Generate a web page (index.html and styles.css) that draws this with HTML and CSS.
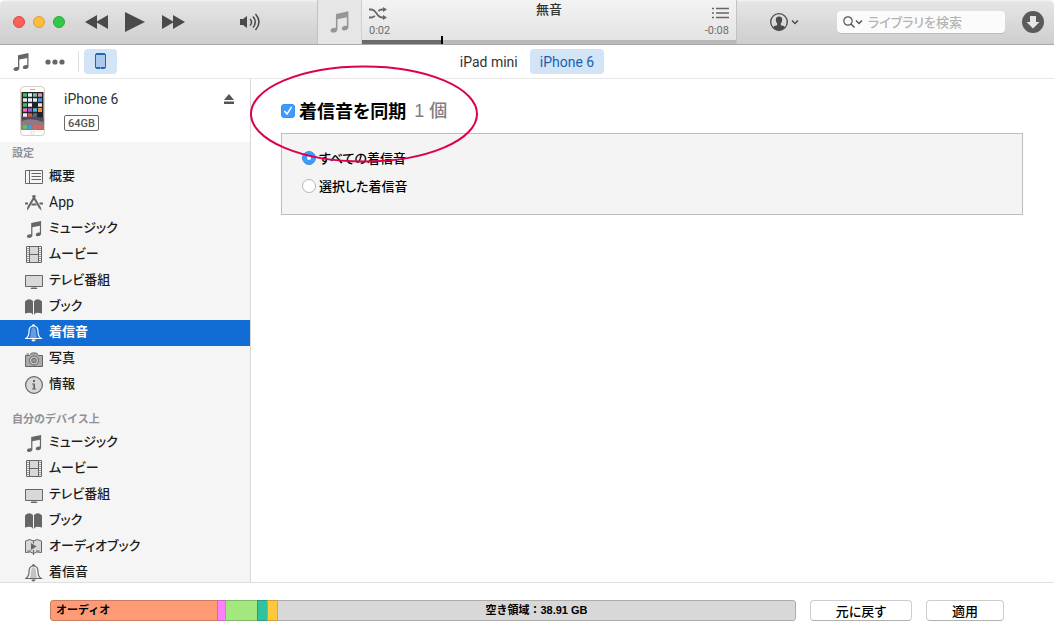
FILE: index.html
```html
<!DOCTYPE html>
<html lang="ja">
<head>
<meta charset="utf-8">
<title>iTunes</title>
<link rel="stylesheet" href="styles.css">
</head>
<body>
<svg class="defs" aria-hidden="true">
  <symbol id="i-note" viewBox="0 0 16 18"><path d="M5 2.200 15.500 0v13.400c0 1.300-1.100 2.300-2.600 2.600-1.900.4-3.200-.5-3-1.800.2-1.400 2-2.400 4.300-2V5L6.300 6.600v8.700c0 1.300-1.200 2.300-2.800 2.600-1.900.3-3.200-.6-3-1.900.2-1.400 2-2.400 4.500-2z" fill="currentColor"/></symbol>
  <symbol id="i-list" viewBox="0 0 18 18"><path d="M.5 2.500h17v13H.5zM4.500 2.500v13M6.500 5.500H16M6.500 8.500H16M6.500 11.500H16" fill="none" stroke="currentColor"/></symbol>
  <symbol id="i-app" viewBox="0 0 18 18"><path d="m10.200 1.500-7 12M7.700 1.500l7 12" fill="none" stroke="currentColor" stroke-width="2"/><path d="M0 9.500h3M6.500 10.500h5M14.500 9.500H18" stroke="currentColor" stroke-width="2" fill="none"/><path d="m2.400 12.500 2 1.200-2.400 3zM13.600 13.700l2-1.200 1 4.200z" fill="currentColor"/></symbol>
  <symbol id="i-film" viewBox="0 0 18 18"><path d="M4.500.5h9v16h-9z" fill="#d8d8d8"/><path d="M3 2v14M15 2v14" stroke="currentColor" stroke-dasharray="1 1" stroke-width="2" opacity=".6"/><path d="M1.500.5h15v16h-15zM4.500.5v16M13.500.5v16M4.500 8.500h9" fill="none" stroke="currentColor"/></symbol>
  <symbol id="i-tv" viewBox="0 0 18 18"><path d="M.5 3.500h17v11H.5z" fill="#d8d8d8" stroke="currentColor"/><path d="M6.500 15.500h5l1 1.500h-7z" fill="currentColor"/></symbol>
  <symbol id="i-book" viewBox="0 0 18 18"><path d="M0 3.500Q4-.5 8 3v14Q7 13.500 0 15.500zM9 3q4-3.500 8 .5v12Q10 13.500 9 17z" fill="currentColor"/></symbol>
  <symbol id="i-abook" viewBox="0 0 18 18"><path d="M.5 3Q5 0 8.500 3 12 0 16.500 3v11.500Q11 13 8.500 15.500 6 13 .5 14.500z" fill="#d8d8d8" stroke="currentColor"/><path d="M8.500 2.500v3M8.500 12v5M2.500 13H6m5 0h3.500" stroke="currentColor" fill="none"/><path d="m6 5 5.500 3.500L6 12z" fill="currentColor"/></symbol>
  <symbol id="i-bell" viewBox="0 0 18 18"><path d="M4.800 14q1.200-2 1.200-6.500 0-3.500 2.500-4.500Q11 4 11 7.500q0 4.500 1.200 6.500z" fill="currentColor" opacity=".35"/><path d="M.8 14.500Q4 12.500 4 7.500q0-5.500 4.500-5.500T13 7.500q0 5 3.200 7zM7.200 2Q7.200.8 8.500.8T9.800 2" fill="none" stroke="currentColor" stroke-width="1.200"/><path d="M6.300 15.500h4.400q-.3 2-2.200 2t-2.200-2z" fill="currentColor"/></symbol>
  <symbol id="i-camera" viewBox="0 0 18 18"><path d="M.5 5.500h4l2-2.500h5l2 2.500h4v11H.5z" fill="#aaa" stroke="currentColor"/><path d="M1.500 4h2.500" stroke="currentColor"/><circle cx="9" cy="10.500" r="4.500" fill="#ccc" stroke="currentColor"/><circle cx="9" cy="10.500" r="2.300" fill="#999" stroke="currentColor"/></symbol>
  <symbol id="i-info" viewBox="0 0 18 18"><circle cx="9" cy="9" r="8.400" fill="#d8d8d8" stroke="currentColor" stroke-width="1.200"/><path d="M8 4h2v2H8zM7 7.500h3V12.500h1.200v1H7v-1h1.300v-4H7z" fill="currentColor"/></symbol>
  <symbol id="i-chev" viewBox="0 0 8 6"><path d="m1 1.500 3 3 3-3" fill="none" stroke="currentColor" stroke-width="1.500"/></symbol>
</svg>

<header class="toolbar">
  <div class="toolbar-left">
    <div class="lights">
      <button class="light red" aria-label="閉じる"></button>
      <button class="light amber" aria-label="しまう"></button>
      <button class="light green" aria-label="拡大"></button>
    </div>
    <div class="transport">
      <button class="plain" aria-label="前へ"><svg width="23" height="14"><path d="M12 0v14L0 7zM23 0v14L11 7z" fill="currentColor"/></svg></button>
      <button class="plain" aria-label="再生"><svg width="20" height="20"><path d="M0 0v20l20-10z" fill="currentColor"/></svg></button>
      <button class="plain" aria-label="次へ"><svg width="23" height="14"><path d="M0 0v14l12-7zM11 0v14l12-7z" fill="currentColor"/></svg></button>
    </div>
    <button class="plain volume" aria-label="音量"><svg width="21" height="18"><path d="M0 6h3l4-3v12l-4-3H0z" fill="currentColor"/><path d="M10 6q3 3 0 6.500M13 3.500q4.500 5.500 0 11M15.500 1q7 8 0 16" fill="none" stroke="currentColor" stroke-width="1.500"/></svg></button>
  </div>
  <div class="lcd">
    <div class="art"><svg width="19" height="22"><use href="#i-note"/></svg></div>
    <div class="lcd-main">
      <div class="lcd-side">
        <button class="plain" aria-label="シャッフル"><svg width="18" height="13"><path d="M0 2.500h2.500q2 0 3.800 2.200l3 4q1.500 1.800 3.500 1.800H15M0 10.500h2.500q2 0 3.300-1.700M9.500 4.200Q11 2.500 13 2.500h2" fill="none" stroke="currentColor" stroke-width="1.800"/><path d="m14 0 4 2.500L14 5zM14 8l4 2.500-4 2.500z" fill="currentColor"/></svg></button>
        <span>0:02</span>
      </div>
      <div class="track">無音</div>
      <div class="lcd-side end">
        <button class="plain" aria-label="リスト"><svg width="17" height="12"><path d="M0 1.500h2M0 6h2M0 10.500h2M4 1.500h13M4 6h13M4 10.500h13" stroke="currentColor" stroke-width="1.500"/></svg></button>
        <span>-0:08</span>
      </div>
      <div class="progress"><div class="played"></div></div>
    </div>
  </div>
  <div class="toolbar-right">
    <button class="plain account" aria-label="アカウント"><svg width="18" height="18"><circle cx="9" cy="9" r="8.300" fill="none" stroke="currentColor" stroke-width="1.300"/><path d="M9 3.500q3.500 0 3.200 3.500-.2 2.500-1.400 3.600v1.600q3.700.6 4.300 2.300Q12.500 17.500 9 17.500T2.900 14.500q.6-1.700 4.300-2.300v-1.600Q6 9.500 5.800 7 5.500 3.500 9 3.500z" fill="currentColor"/></svg><svg width="8" height="6"><use href="#i-chev"/></svg></button>
    <label class="search">
      <svg width="12" height="12"><circle cx="5" cy="5" r="4.200" fill="none" stroke="currentColor" stroke-width="1.200"/><path d="m8 8 3.500 3.500" stroke="currentColor" stroke-width="1.500"/></svg><svg width="8" height="6"><use href="#i-chev"/></svg>
      <input type="text" placeholder="ライブラリを検索" aria-label="ライブラリを検索">
    </label>
    <button class="plain" aria-label="ダウンロード"><svg width="22" height="22"><circle cx="11" cy="11" r="11" fill="#5a5a5a"/><path d="M8 5h6v6h3.500L11 17.500 4.500 11H8z" fill="#e6e6e6"/></svg></button>
  </div>
</header>

<nav class="subbar">
  <div class="kinds">
    <button class="plain" aria-label="ミュージック"><svg width="16" height="18"><use href="#i-note"/></svg></button>
    <button class="plain more" aria-label="その他"><svg width="20" height="6"><circle cx="3" cy="3" r="2.600" fill="currentColor"/><circle cx="10" cy="3" r="2.600" fill="currentColor"/><circle cx="17" cy="3" r="2.600" fill="currentColor"/></svg></button>
    <button class="plain device-btn" aria-label="デバイス"><svg width="11" height="17"><rect x=".5" y=".5" width="10" height="15" rx="1.500" fill="#abc8e8" stroke="#1f66b8"/><path d="M1 1.500h9M1 14.500h9" stroke="#1f66b8"/><path d="M5 15h1" stroke="#d2e3f6"/></svg></button>
  </div>
  <div class="tabs">
    <button class="tab">iPad mini</button>
    <button class="tab current">iPhone 6</button>
  </div>
</nav>

<div class="body">
  <aside class="sidebar">
    <div class="device">
      <svg width="25" height="50" viewBox="0 0 25 50">
        <rect x=".5" y=".5" width="24" height="49" rx="3.500" fill="#fefdfb" stroke="#d9cdbf"/>
        <path d="M10 3.500h5" stroke="#b5aea6"/>
        <rect x="1.500" y="6" width="22" height="38" fill="#20222e"/>
        <path d="M1.500 30q7-4 11-1t11 2v7h-22z" fill="#524a5c"/>
        <path d="M1.500 35q9-4 22 1v8h-22z" fill="#8c7b80"/>
        <g stroke-width="3.500">
          <path d="M3 9h4M3 19h4" stroke="#42bf57"/><path d="M8 9h4M13 14h4M3 14h4" stroke="#e9eef2"/><path d="M13 9h4" stroke="#78bf9a"/><path d="M18 9h4" stroke="#ee8d9e"/>
          <path d="M8 14h4M18 24h4" stroke="#eff3f7"/><path d="M18 14h4" stroke="#3da5e0"/>
          <path d="M8 19h4" stroke="#f5f6ed"/><path d="M18 19h4" stroke="#e8e8de"/>
          <path d="M3 24h4" stroke="#e773b2"/><path d="M8 24h4" stroke="#a35ed2"/><path d="M13 24h4" stroke="#48bde8"/><path d="M18 24h4" stroke="#f08a28"/>
          <path d="M3 29h4" stroke="#ededed"/><path d="M8 29h4" stroke="#dc5145"/><path d="M13 29h4" stroke="#646970"/>
          <path d="M3 41h4" stroke="#49d05b"/><path d="M8 41h4" stroke="#3b9de9"/><path d="M13 41h4" stroke="#ef5b51"/><path d="M18 41h4" stroke="#ef5b51"/>
        </g>
        <circle cx="12.500" cy="46.800" r="1.700" fill="#fff" stroke="#d9cdbf" stroke-width=".7"/>
      </svg>
      <div class="device-text"><span class="device-name">iPhone 6</span><span class="capacity">64GB</span></div>
      <button class="plain eject" aria-label="取り出す"><svg width="10" height="10"><path d="m5 0 5 6H0zM0 7.500h10V10H0z" fill="currentColor"/></svg></button>
    </div>
    <h2>設定</h2>
    <ul>
      <li><a href="#"><svg><use href="#i-list"/></svg><span>概要</span></a></li>
      <li><a href="#"><svg><use href="#i-app"/></svg><span class="latin">App</span></a></li>
      <li><a href="#"><svg class="note"><use href="#i-note"/></svg><span>ミュージック</span></a></li>
      <li><a href="#"><svg><use href="#i-film"/></svg><span>ムービー</span></a></li>
      <li><a href="#"><svg><use href="#i-tv"/></svg><span>テレビ番組</span></a></li>
      <li><a href="#"><svg><use href="#i-book"/></svg><span>ブック</span></a></li>
      <li><a href="#" class="selected"><svg><use href="#i-bell"/></svg><span>着信音</span></a></li>
      <li><a href="#"><svg><use href="#i-camera"/></svg><span>写真</span></a></li>
      <li><a href="#"><svg><use href="#i-info"/></svg><span>情報</span></a></li>
    </ul>
    <h2 class="second">自分のデバイス上</h2>
    <ul>
      <li><a href="#"><svg class="note"><use href="#i-note"/></svg><span>ミュージック</span></a></li>
      <li><a href="#"><svg><use href="#i-film"/></svg><span>ムービー</span></a></li>
      <li><a href="#"><svg><use href="#i-tv"/></svg><span>テレビ番組</span></a></li>
      <li><a href="#"><svg><use href="#i-book"/></svg><span>ブック</span></a></li>
      <li><a href="#"><svg><use href="#i-abook"/></svg><span>オーディオブック</span></a></li>
      <li><a href="#"><svg><use href="#i-bell"/></svg><span>着信音</span></a></li>
    </ul>
  </aside>
  <main>
    <div class="sync">
      <input type="checkbox" id="sync" checked>
      <label for="sync">着信音を同期</label>
      <span class="count">1 個</span>
      <svg class="ring" width="230" height="98"><ellipse cx="115" cy="49" rx="113" ry="47.500" fill="none" stroke="#dc0050" stroke-width="2"/></svg>
    </div>
    <div class="options">
      <label><input type="radio" name="tones" checked>すべての着信音</label>
      <label><input type="radio" name="tones">選択した着信音</label>
    </div>
  </main>
</div>

<footer>
  <div class="usage">
    <div class="seg audio">オーディオ</div>
    <div class="seg photos"></div>
    <div class="seg apps"></div>
    <div class="seg books"></div>
    <div class="seg docs"></div>
    <div class="seg free">空き領域：38.91 GB</div>
  </div>
  <button class="push wide">元に戻す</button>
  <button class="push">適用</button>
</footer>
</body>
</html>
```

FILE: styles.css
```css
* { box-sizing: border-box; }
html, body { height: 100%; }
body {
  margin: 0;
  display: flex;
  flex-direction: column;
  background: #fff;
  color: #1c1c1c;
  font: 13px/20px "Noto Sans CJK JP", sans-serif;
  overflow: hidden;
}
svg { display: block; flex: none; }
.defs { position: absolute; width: 0; height: 0; }
button, input { font: inherit; color: inherit; margin: 0; }
.plain { display: flex; align-items: center; padding: 0; border: 0; background: none; color: #4a4a4a; }

.toolbar {
  flex: none;
  display: grid;
  grid-template-columns: 1fr 420px 1fr;
  height: 45px;
  border-bottom: 1px solid #a9a9a9;
  border-radius: 5px 5px 0 0;
  background: linear-gradient(#f4f4f4 0, #e5e5e5 2px, #cecece);
}
.toolbar-left, .toolbar-right { display: flex; align-items: center; }
.toolbar-left { padding-left: 13px; }
.lights { display: flex; gap: 8px; }
.light { width: 12px; height: 12px; padding: 0; border: 1px solid; border-radius: 50%; }
.red { background: #fc605c; border-color: #df4744; }
.amber { background: #fdbc40; border-color: #de9f34; }
.green { background: #34c84a; border-color: #27aa35; }
.transport { display: flex; align-items: center; gap: 17px; margin-left: 20px; }
.volume { margin-left: 55px; }
.lcd {
  display: flex;
  border: solid #c2c2c2;
  border-width: 0 1px;
  background: linear-gradient(#f3f3f3, #e2e2e2);
}
.art { display: flex; align-items: center; justify-content: center; width: 44px; background: #e6e6e6; border-right: 1px solid #d0d0d0; color: #969696; }
.lcd-main { flex: 1; display: grid; grid-template-columns: 1fr auto 1fr; grid-template-rows: 1fr 4px; }
.lcd-side { display: flex; flex-direction: column; gap: 3px; padding: 7px 7px 0; color: #6c6c6c; font: 11px/18px Roboto, sans-serif; }
.lcd-side .plain { height: 12px; color: #666; }
.end { align-items: flex-end; }
.track { margin-top: -1px; font-weight: 500; color: #333; }
.progress { grid-column: 1 / -1; background: #b9b9b9; }
.played { width: 81px; height: 8px; margin-top: -4px; border-right: 2px solid #000; background: linear-gradient(transparent 4px, #6b6b6b 4px); }
.toolbar-right { justify-content: flex-end; padding-right: 10px; }
.account { gap: 3px; margin-right: 38px; }
.search { display: flex; align-items: center; width: 168px; height: 22px; margin-right: 17px; padding-left: 6px; border-radius: 4px; background: #fbfbfb; box-shadow: 0 1px 0 #bcbcbc; color: #555; }
.search input { width: 100%; min-width: 0; padding: 0 0 0 5px; border: 0; background: none; outline: 0; font-weight: 500; font-feature-settings: "palt"; }
.search input::placeholder { color: #b4b4b4; opacity: 1; }

.subbar { flex: none; display: grid; grid-template-columns: 1fr auto 1fr; align-items: center; height: 34px; border-bottom: 1px solid #e9e9e9; }
.kinds { display: flex; align-items: center; padding-left: 13px; }
.kinds .plain { color: #666; }
.more { margin: 0 13px 0 16px; }
.device-btn { justify-content: center; width: 33px; height: 25px; border-radius: 4px; background: #d3e4f6; margin-left: 5px; }
.more::after { content: ""; width: 1px; height: 21px; margin-left: 13px; margin-right: -13px; background: #dedede; }
.tabs { display: flex; gap: 2px; }
.tab { height: 25px; padding: 0 10px; border: 0; border-radius: 4px; background: none; color: #333; font: 14px/24px Roboto, sans-serif; }
.current { background: #d3e4f6; color: #1d5fae; }

.body { flex: 1; min-height: 0; display: flex; }
.sidebar { flex: none; width: 251px; overflow: hidden; border-right: 1px solid #d9d9d9; background: #f5f5f5; }
.device { display: flex; align-items: flex-start; height: 63px; padding: 7px 16px 0 20px; background: #fff; }
.device-text { display: flex; flex-direction: column; align-items: flex-start; gap: 3px; flex: 1; padding-left: 19px; }
.device-name { color: #333; font: 14px/26px Roboto, sans-serif; }
.capacity { height: 16px; padding: 0 3px; border: 1px solid #6b6b6b; border-radius: 2px; color: #555; font: 500 11px/15px Roboto, sans-serif; }
.eject { padding-top: 8px; color: #555; }
h2 { margin: 0; padding: 0 0 1px 12px; color: #909096; font: bold 11px/21px "Noto Sans CJK JP", sans-serif; }
.second { padding-top: 10px; }
ul { margin: 0; padding: 0; list-style: none; }
.sidebar a { display: flex; align-items: center; gap: 6px; height: 26px; padding-left: 25px; color: #1c1c1c; font-weight: 500; font-feature-settings: "palt"; text-decoration: none; }
.sidebar a svg { width: 18px; height: 18px; color: #666; }
.sidebar a .note { height: 17px; margin-top: 1px; }
.sidebar a span { padding-bottom: 5px; }
.sidebar a .latin { padding-bottom: 3px; font: 14px/20px Roboto, sans-serif; }
.sidebar .selected, .sidebar .selected svg { color: #fff; }
.sidebar .selected { background: #116cd6; font-weight: 700; }

main { flex: 1; padding: 18px 31px 0 30px; color: #000; }
.sync { position: relative; display: flex; align-items: center; height: 28px; font-size: 18px; line-height: 28px; font-feature-settings: "palt"; }
.sync label { padding: 0 0 2px 4px; font-weight: 700; }
.count { padding-left: 8px; color: #808080; font: 500 18px/28px "Liberation Sans", "Noto Sans CJK JP", sans-serif; }
.ring { position: absolute; left: -32px; top: -32px; pointer-events: none; z-index: 1; }
input[type="checkbox"], input[type="radio"] { appearance: none; flex: none; width: 14px; height: 14px; border: 1px solid #b5b5b5; background: #fff; }
input[type="checkbox"] { border-radius: 3px; }
input[type="radio"] { border-radius: 50%; }
input:checked { border-color: #3b8fee; background: #3e9bfa; }
input[type="checkbox"]:checked::before { content: ""; display: block; width: 12px; height: 12px; background: #fff; clip-path: polygon(15% 55%, 25% 45%, 42% 65%, 75% 12%, 85% 18%, 43% 85%); }
input[type="radio"]:checked::before { content: ""; display: block; width: 4px; height: 4px; margin: 4px; border-radius: 50%; background: #fff; }
.options { display: flex; flex-direction: column; gap: 8px; margin-top: 8px; padding: 14px 20px 18px; border: 1px solid #bdbdbd; background: #f4f4f4; }
.options label { display: flex; align-items: center; gap: 3px; font-weight: 500; font-feature-settings: "palt"; }

footer { flex: none; display: flex; align-items: center; gap: 14px; height: 56px; padding: 0 50px; border-top: 1px solid #dfdfdf; color: #000; }
.usage { flex: 1; display: flex; height: 21px; border-radius: 3px; overflow: hidden; font: bold 11px/19px "Liberation Sans", "Noto Sans CJK JP", sans-serif; }
.seg { border: 1px solid #0003; border-width: 1px 0 1px 1px; }
.audio { width: 167px; padding-left: 5px; border-radius: 3px 0 0 3px; background: #fe9b75; }
.photos { width: 8px; background: #fa82fb; }
.apps { width: 32px; background: #a2e87f; }
.books { width: 10px; background: #2fc3a0; }
.docs { width: 10px; background: #fec73c; }
.free { flex: 1; border-right-width: 1px; border-radius: 0 3px 3px 0; background: #d8d8d8; text-align: center; }
.push { width: 78px; height: 21px; padding: 0; border: 1px solid #cdcdcd; border-bottom-color: #b0b0b0; border-radius: 4px; background: #fff; font-weight: 500; line-height: 16px; font-feature-settings: "palt"; }
.wide { width: 102px; }
```
